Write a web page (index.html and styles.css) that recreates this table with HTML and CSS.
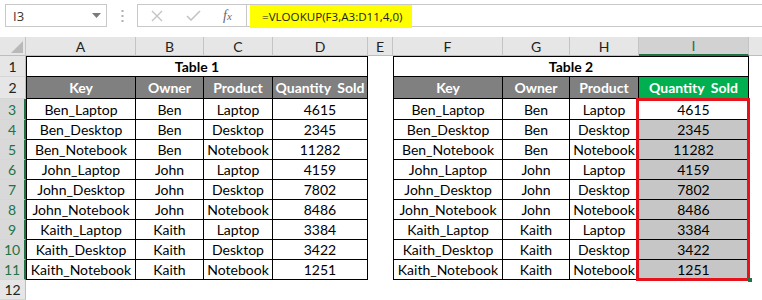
FILE: index.html
```html
<!DOCTYPE html>
<html>
<head>
<link rel="stylesheet" href="styles.css">
</head>
<body>

<div class="bar">
  <div class="namebox">
    <span>I3</span>
    <svg class="drop" width="9" height="5" viewBox="0 0 9 5"><path d="M0 0h9L4.5 5z" fill="#7a7a7a"/></svg>
  </div>
  <div class="grip">
    <svg width="3" height="12" viewBox="0 0 3 12"><rect x="0.5" y="0" width="2" height="2" fill="#b0b0b0"/><rect x="0.5" y="5" width="2" height="2" fill="#b0b0b0"/><rect x="0.5" y="10" width="2" height="2" fill="#b0b0b0"/></svg>
  </div>
  <div class="btns">
    <svg class="cancel" width="12" height="12" viewBox="0 0 12 12"><path d="M1 1l10 10M11 1L1 11" stroke="#c4c4c4" stroke-width="1.4"/></svg>
    <svg class="enter" width="15" height="11" viewBox="0 0 15 11"><path d="M1 6l4 4L14 1" stroke="#c4c4c4" stroke-width="1.6" fill="none"/></svg>
    <span class="fx">f<small>x</small></span>
  </div>
  <div class="formula">
    <span class="hl">=VLOOKUP(F3,A3:D11,4,0)</span>
  </div>
</div>

<div class="wrap">
  <div class="sheet">
    <!-- column headers -->
    <div class="ch corner"><span class="tri"></span></div>
    <div class="ch">A</div>
    <div class="ch">B</div>
    <div class="ch">C</div>
    <div class="ch">D</div>
    <div class="ch">E</div>
    <div class="ch">F</div>
    <div class="ch">G</div>
    <div class="ch">H</div>
    <div class="ch sel">I</div>
    <div class="ch last"></div>

    <!-- row 1 -->
    <div class="rh">1</div>
    <div class="t title first">Table 1</div>
    <div class="c"></div>
    <div class="t title first">Table 2</div>
    <div class="c"></div>

    <!-- row 2 -->
    <div class="rh">2</div>
    <div class="t hd first">Key</div>
    <div class="t hd">Owner</div>
    <div class="t hd">Product</div>
    <div class="t hd qty">Quantity Sold</div>
    <div class="c"></div>
    <div class="t hd first">Key</div>
    <div class="t hd">Owner</div>
    <div class="t hd">Product</div>
    <div class="t hd qty green">Quantity Sold</div>
    <div class="c"></div>

    <!-- rows 3-11 -->
    <div class="rh sel">3</div>
    <div class="t first">Ben_Laptop</div><div class="t">Ben</div><div class="t">Laptop</div><div class="t">4615</div>
    <div class="c"></div>
    <div class="t first">Ben_Laptop</div><div class="t">Ben</div><div class="t">Laptop</div><div class="t">4615</div>
    <div class="c"></div>

    <div class="rh sel">4</div>
    <div class="t first">Ben_Desktop</div><div class="t">Ben</div><div class="t">Desktop</div><div class="t">2345</div>
    <div class="c"></div>
    <div class="t first">Ben_Desktop</div><div class="t">Ben</div><div class="t">Desktop</div><div class="t shade">2345</div>
    <div class="c"></div>

    <div class="rh sel">5</div>
    <div class="t first">Ben_Notebook</div><div class="t">Ben</div><div class="t">Notebook</div><div class="t">11282</div>
    <div class="c"></div>
    <div class="t first">Ben_Notebook</div><div class="t">Ben</div><div class="t">Notebook</div><div class="t shade">11282</div>
    <div class="c"></div>

    <div class="rh sel">6</div>
    <div class="t first">John_Laptop</div><div class="t">John</div><div class="t">Laptop</div><div class="t">4159</div>
    <div class="c"></div>
    <div class="t first">John_Laptop</div><div class="t">John</div><div class="t">Laptop</div><div class="t shade">4159</div>
    <div class="c"></div>

    <div class="rh sel">7</div>
    <div class="t first">John_Desktop</div><div class="t">John</div><div class="t">Desktop</div><div class="t">7802</div>
    <div class="c"></div>
    <div class="t first">John_Desktop</div><div class="t">John</div><div class="t">Desktop</div><div class="t shade">7802</div>
    <div class="c"></div>

    <div class="rh sel">8</div>
    <div class="t first">John_Notebook</div><div class="t">John</div><div class="t">Notebook</div><div class="t">8486</div>
    <div class="c"></div>
    <div class="t first">John_Notebook</div><div class="t">John</div><div class="t">Notebook</div><div class="t shade">8486</div>
    <div class="c"></div>

    <div class="rh sel">9</div>
    <div class="t first">Kaith_Laptop</div><div class="t">Kaith</div><div class="t">Laptop</div><div class="t">3384</div>
    <div class="c"></div>
    <div class="t first">Kaith_Laptop</div><div class="t">Kaith</div><div class="t">Laptop</div><div class="t shade">3384</div>
    <div class="c"></div>

    <div class="rh sel">10</div>
    <div class="t first">Kaith_Desktop</div><div class="t">Kaith</div><div class="t">Desktop</div><div class="t">3422</div>
    <div class="c"></div>
    <div class="t first">Kaith_Desktop</div><div class="t">Kaith</div><div class="t">Desktop</div><div class="t shade">3422</div>
    <div class="c"></div>

    <div class="rh sel">11</div>
    <div class="t first">Kaith_Notebook</div><div class="t">Kaith</div><div class="t">Notebook</div><div class="t">1251</div>
    <div class="c"></div>
    <div class="t first">Kaith_Notebook</div><div class="t">Kaith</div><div class="t">Notebook</div><div class="t shade">1251</div>
    <div class="c"></div>

    <!-- row 12 -->
    <div class="rh">12</div>
    <div class="c blank"></div>
  </div>

  <!-- selection outline over I3:I11 -->
  <div class="redbox"></div>
  <div class="handle"></div>
</div>

</body>
</html>
```

FILE: styles.css
```css
* {
    box-sizing: border-box;
}
body {
    margin: 0;
    width: 762px;
    height: 300px;
    overflow: hidden;
    background: #fff;
    font-family: "Lato", "Liberation Sans", sans-serif;
}

/* formula bar */
.bar {
    display: flex;
    align-items: flex-start;
    height: 37px;
    padding: 4px 0 0 5px;
}
.namebox {
    display: flex;
    align-items: center;
    justify-content: space-between;
    width: 102px;
    height: 23px;
    padding: 0 5px 0 7px;
    border: 1px solid #c8c8c8;
    font-family: "Open Sans", "Liberation Sans", sans-serif;
    font-size: 13px;
    color: #333;
}
.grip {
    display: flex;
    justify-content: center;
    width: 30px;
    padding-top: 6px;
}
.btns {
    display: flex;
    align-items: center;
    width: 110px;
    height: 23px;
    border: 1px solid #c8c8c8;
}
.cancel {
    margin-left: 13px;
}
.enter {
    margin-left: 23px;
}
.fx {
    margin-left: 22px;
    font-family: "Liberation Serif", serif;
    font-style: italic;
    font-size: 14px;
    color: #6a6a6a;
}
.fx small {
    font-size: 11px;
}
.formula {
    flex: 1;
    height: 23px;
    border-top: 1px solid #c8c8c8;
    border-bottom: 1px solid #c8c8c8;
    padding-left: 3px;
}
.hl {
    display: inline-block;
    height: 23px;
    margin-top: -1px;
    width: 162px;
    padding-left: 12px;
    background: #ffff00;
    font-family: "Open Sans", "Liberation Sans", sans-serif;
    font-size: 11.6px;
    line-height: 23px;
    color: #222;
}

/* worksheet */
.wrap {
    position: relative;
}
.sheet {
    display: grid;
    grid-template-columns: 26px 110px 68px 69px 95px 25px 110px 67px 69px 110px 1fr;
    grid-template-rows: 19px 21px 22px 21px repeat(8, 20px) 20px;
    font-size: 14px;
    color: #000;
}
.sheet > div {
    display: flex;
    align-items: center;
    justify-content: center;
    white-space: nowrap;
}
.ch {
    background: #e6e6e6;
    border-right: 1px solid #c4c4c4;
    border-bottom: 1px solid #bdbdbd;
    font-size: 14px;
    color: #222;
}
.ch.sel {
    background: #d2d2d2;
    color: #217346;
    border-bottom: 2px solid #217346;
}
.ch.last {
    border-right: none;
}
.corner {
    position: relative;
}
.tri {
    position: absolute;
    right: 2px;
    bottom: 2px;
    width: 0;
    height: 0;
    border-left: 12px solid transparent;
    border-bottom: 12px solid #b9b9b9;
}
.rh {
    background: #e6e6e6;
    border-right: 1px solid #bdbdbd;
    border-bottom: 1px solid #d6d6d6;
    font-size: 14px;
    color: #222;
}
.rh.sel {
    background: #d9d9d9;
    color: #217346;
    border-right: 2px solid #217346;
}
.c {
    background: #fff;
}
.blank {
    grid-column: span 10;
}
.t {
    background: #fff;
    border-right: 1px solid #000;
    border-bottom: 1px solid #000;
}
.t.first {
    border-left: 1px solid #000;
}
.title {
    grid-column: span 4;
    border-top: 1px solid #000;
    font-weight: bold;
}
.hd {
    background: #808080;
    color: #fff;
    font-weight: bold;
}
.qty {
    word-spacing: 3px;
}
.hd.green {
    background: #00b050;
}
.t.shade {
    background: #c6c6c6;
}
.redbox {
    position: absolute;
    left: 636px;
    top: 61px;
    width: 114px;
    height: 183px;
    border: 3px solid #e5141c;
}
.handle {
    position: absolute;
    left: 748px;
    top: 241px;
    width: 4px;
    height: 4px;
    background: #217346;
}
```
